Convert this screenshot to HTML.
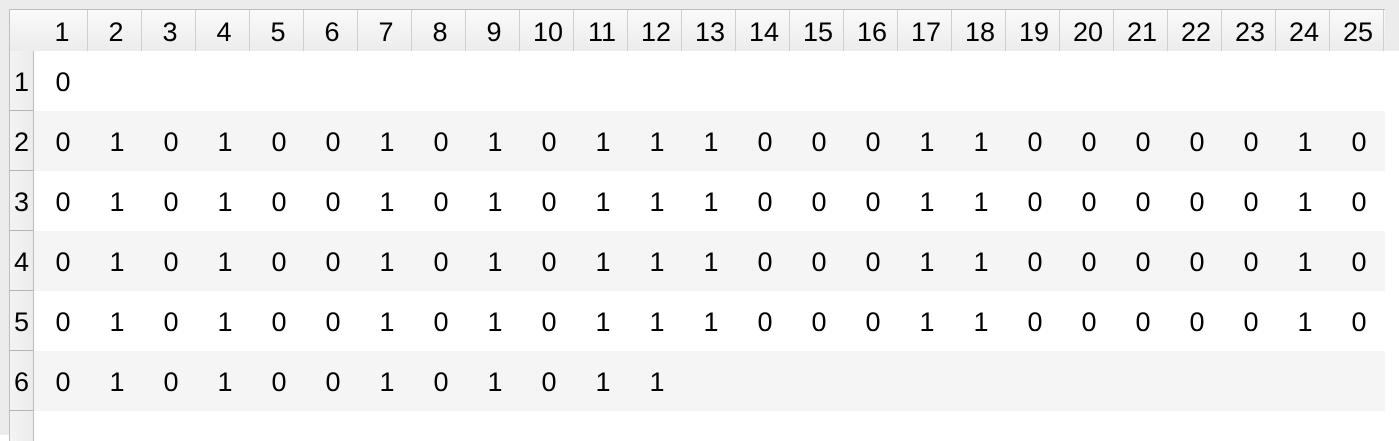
<!DOCTYPE html>
<html><head><style>
body{margin:0;width:1399px;height:435px;background:#fff;position:relative;overflow:hidden;font-family:"Liberation Sans",sans-serif;font-size:27px;color:#000}
.top{position:absolute;left:0;top:0;width:1399px;height:51px;background:#ececec}
.hdr{position:absolute;left:9px;top:9px;width:1375px;height:41px;border-top:1px solid #bdbdbd;border-left:1px solid #bdbdbd;border-bottom:1px solid #b5b5b5;background:linear-gradient(#fafafa,#ececec)}
.hc{position:absolute;top:0;height:41px;line-height:45px;text-align:center;width:54px;border-right:1px solid #cfcfcf;box-sizing:border-box;padding-left:3px}
.left{position:absolute;left:0;top:51px;width:9px;height:384px;background:#ececec}
.rh{position:absolute;left:9px;width:25px;box-sizing:border-box;border-left:1px solid #bdbdbd;border-right:1px solid #bdbdbd;border-bottom:1px solid #b5b5b5;background:linear-gradient(90deg,#f4f4f4,#ebebeb);text-align:center;line-height:62px}
.row{position:absolute;left:34px;width:1351px;height:60px}
.c{position:absolute;top:0;width:54px;text-align:center;line-height:62px;padding-left:2px}
</style></head><body>
<div class="top"></div>
<div class="hdr" id="h"></div>
<div class="left"></div>
<div id="b"></div>
<script>
var h=document.getElementById('h'),s='';
for(var i=1;i<=25;i++){s+='<div class="hc" style="left:'+(24+(i-1)*54)+'px">'+i+'</div>';}
h.innerHTML=s;
var full=[0,1,0,1,0,0,1,0,1,0,1,1,1,0,0,0,1,1,0,0,0,0,0,1,0];
var rows=[[0],full,full,full,full,full.slice(0,12)];
var b='';
for(var r=0;r<6;r++){var y=51+r*60;
b+='<div class="rh" style="top:'+y+'px;height:60px">'+(r+1)+'</div>';
b+='<div class="row" style="top:'+y+'px;background:'+(r%2?'#f5f5f5':'#fff')+'">';
for(var c=0;c<rows[r].length;c++)b+='<div class="c" style="left:'+(c*54)+'px">'+rows[r][c]+'</div>';
b+='</div>';}
b+='<div class="rh" style="top:411px;height:30px;border-bottom:none"></div>';
document.getElementById('b').innerHTML=b;
</script>
</body></html>
